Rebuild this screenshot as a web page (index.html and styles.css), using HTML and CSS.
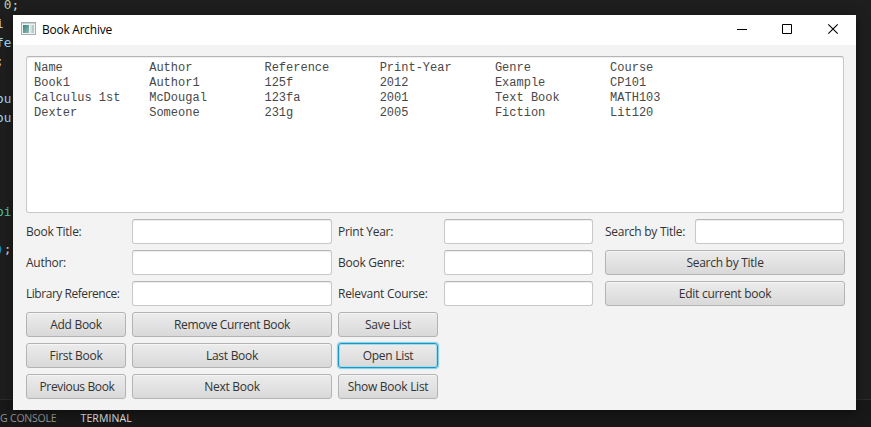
FILE: index.html
```html
<!DOCTYPE html>
<html lang="en">
<head>
<meta charset="utf-8">
<title>Book Archive</title>
<link rel="stylesheet" href="styles.css">
</head>
<body>
<div class="editor">
<pre class="code"> <span class="num">0</span>;
i
<span class="var">fe</span>
;

<span class="var">ou</span>
<span class="var">ou</span>




<span class="type">pi</span>

<span class="paren">)</span>;</pre>
<div class="panel"><span class="tab">G CONSOLE</span><span class="tab active">TERMINAL</span></div>
</div>
<main class="window">
  <header class="titlebar">
    <svg class="app-icon" width="16" height="14" viewBox="0 0 16 14"><defs><linearGradient id="pane" x2="1" y2="1"><stop stop-color="#3b827c"/><stop offset="1" stop-color="#91bbb4"/></linearGradient></defs><rect x=".5" y=".5" width="14" height="12" fill="#eef3f3" stroke="#a3adb2"/><path d="M1 1.5h13" stroke="#cbd2d5"/><path d="M2 3h6v8H2z" fill="url(#pane)"/><path d="M9 3h2v8H9z" fill="#d3dfdf"/><path d="M11 3h2v8h-2z" fill="#b5cac9"/></svg>
    <h1>Book Archive</h1>
    <div class="controls">
      <svg width="46" height="30" viewBox="0 0 46 30"><path d="M18 14.5h10" stroke="#000"/></svg>
      <svg width="46" height="30" viewBox="0 0 46 30"><path d="M17.5 9.5h9v9h-9z" fill="none" stroke="#000"/></svg>
      <svg width="46" height="30" viewBox="0 0 46 30"><path d="M17.3 9.3l9.4 9.4M26.7 9.3l-9.4 9.4" stroke="#000" stroke-width="1.1"/></svg>
    </div>
  </header>
  <div class="content">
<pre class="listing">Name            Author          Reference       Print-Year      Genre           Course
Book1           Author1         125f            2012            Example         CP101
Calculus 1st    McDougal        123fa           2001            Text Book       MATH103
Dexter          Someone         231g            2005            Fiction         Lit120</pre>
    <div class="form">
      <div class="fields">
        <label for="title">Book Title:</label><input id="title"><label for="year">Print Year:</label><input id="year">
        <label for="author">Author:</label><input id="author"><label for="genre">Book Genre:</label><input id="genre">
        <label for="ref" class="tight">Library Reference:</label><input id="ref"><label for="course">Relevant Course:</label><input id="course">
        <button>Add Book</button><button class="tight">Remove Current Book</button><button>Save List</button><i></i>
        <button>First Book</button><button>Last Book</button><button class="focused">Open List</button><i></i>
        <button class="nudge">Previous Book</button><button>Next Book</button><button>Show Book List</button>
      </div>
      <div class="search">
        <div class="query"><label for="search">Search by Title:</label><input id="search"></div>
        <button>Search by Title</button>
        <button>Edit current book</button>
      </div>
    </div>
  </div>
</main>
</body>
</html>
```
FILE: styles.css
```css
* { box-sizing: border-box; }
body {
  margin: 0;
  width: 871px;
  height: 427px;
  overflow: hidden;
  position: relative;
  background: #1e1e1e;
  color: #333;
  font: 12px/16px "Open Sans", sans-serif;
}
.editor {
  height: 427px;
  display: flex;
  flex-direction: column;
  justify-content: space-between;
}
.code {
  margin: -4px 0 0 -4px;
  color: #d4d4d4;
  font: 12.8px/18.8px "DejaVu Sans Mono", monospace;
}
.num { color: #b5cea8; }
.var { color: #9cdcfe; }
.type { color: #4ec9b0; }
.paren { color: #179fff; }
.panel {
  height: 28px;
  padding-top: 10px;
  display: flex;
  gap: 24px;
  background: #181818;
  border-top: 1px solid #2b2b2b;
  font-size: 10.5px;
  line-height: 16px;
  letter-spacing: -.2px;
}
.tab { color: #969696; }
.tab.active { color: #e0e0e0; letter-spacing: .1px; }
.window {
  position: absolute;
  left: 13px;
  top: 15px;
  width: 843px;
  height: 395px;
  background: #f3f3f3;
  box-shadow: 0 2px 10px rgba(0, 0, 0, .5);
}
.titlebar {
  height: 30px;
  display: flex;
  align-items: center;
  padding-left: 8px;
  background: #fff;
}
.app-icon { margin: 0 5px 2px 0; }
h1 {
  margin: 0;
  color: #000;
  font-size: 12px;
  font-weight: 400;
  letter-spacing: -.25px;
}
.controls { display: flex; margin-right: -1px; margin-left: auto; }
.content { padding: 11px 11px 0 13px; }
.listing {
  margin: 0 0 6px;
  width: 818px;
  height: 157px;
  padding: 4px 7px;
  color: #484848;
  background: #fff;
  border: 1px solid #c8c8c8;
  border-top-color: #b5b5b5;
  border-radius: 3px;
  box-shadow: inset 0 1px 1px #eee;
  font: 12px/15px "Liberation Mono", monospace;
}
.form { display: flex; gap: 12px; }
.fields {
  display: grid;
  grid-template-columns: 100px 200px 100px 149px;
  grid-auto-rows: 25px;
  gap: 6px;
}
.search {
  width: 240px;
  display: grid;
  grid-template-rows: repeat(3, 25px);
  gap: 6px;
}
.query {
  display: grid;
  grid-template-columns: 90px 149px;
}
label {
  line-height: 25px;
  letter-spacing: -.27px;
  white-space: nowrap;
}
input {
  width: 100%;
  height: 25px;
  padding: 4px 7px;
  background: #fff;
  border: 1px solid #c8c8c8;
  border-top-color: #b5b5b5;
  border-radius: 3px;
  box-shadow: inset 0 1px 1px #eee;
}
button {
  height: 25px;
  padding: 0;
  color: #333;
  background: linear-gradient(#ececec, #d9d9d9);
  border: 1px solid #b3b3b3;
  border-radius: 3px;
  box-shadow: inset 0 1px #f5f5f5;
  font: 12px/23px "Open Sans", sans-serif;
  letter-spacing: -.27px;
  white-space: nowrap;
}
label.tight { letter-spacing: -.46px; }
button.tight { letter-spacing: -.38px; }
.focused {
  border-color: #1899c4;
  box-shadow: inset 0 0 0 1px #a5daeb, 0 0 1px 1px #7fcde6;
}
.nudge { padding-left: 2px; letter-spacing: -.37px; }
```
